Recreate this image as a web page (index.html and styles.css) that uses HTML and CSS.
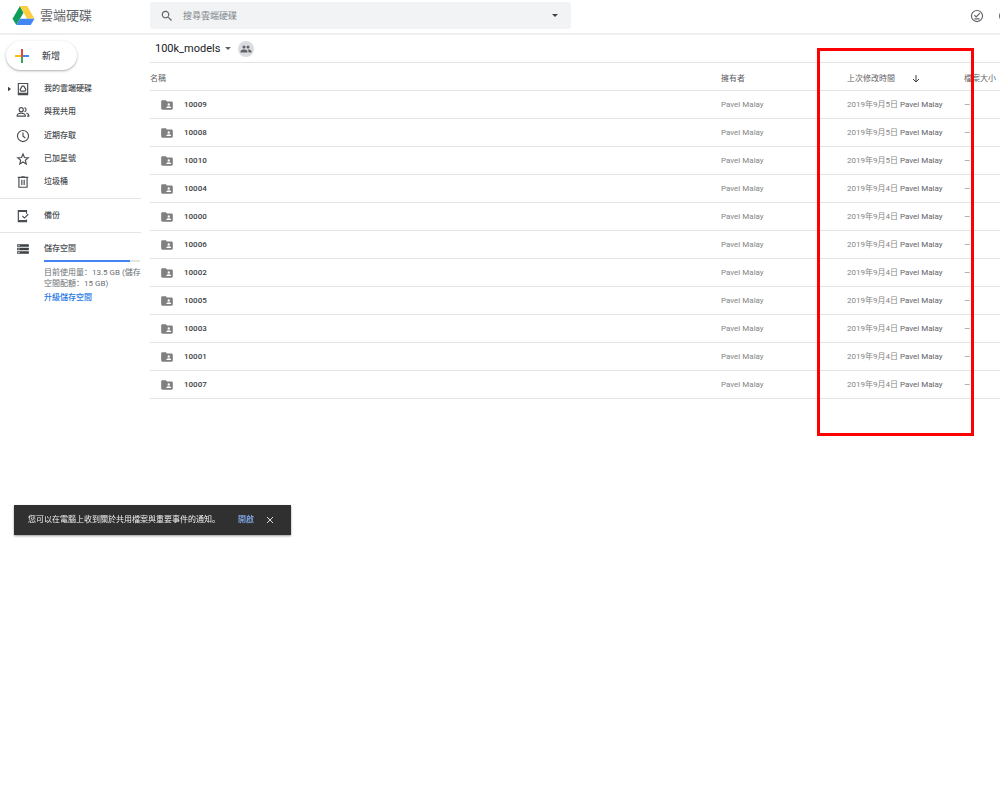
FILE: index.html
```
<!DOCTYPE html>
<html lang="zh">
<head>
<meta charset="utf-8">
<title>100k_models - 雲端硬碟</title>
<link rel="stylesheet" href="styles.css">
</head>
<body>
<svg class="sprite" aria-hidden="true">
  <symbol id="folder" viewBox="0 0 24 24"><path d="M20 6h-8l-2-2H4a2 2 0 0 0-2 2v12a2 2 0 0 0 2 2h16a2 2 0 0 0 2-2V8a2 2 0 0 0-2-2zm-5 3a2 2 0 1 1 0 4 2 2 0 0 1 0-4zm4 8h-8v-1c0-1.330 2.670-2 4-2s4 .67 4 2v1z"/></symbol>
</svg>
<header class="topbar">
  <a class="brand" href="#">
    <svg class="logo" viewBox="0 0 24 22">
      <path fill="#0f9d58" d="M8.300 1 0.500 14.500 4.500 21 12 8z"/>
      <path fill="#ffcd40" d="M8.300 1h7.600L23.500 14.500h-7.800z"/>
      <path fill="#4285f4" d="M8.300 14.500h15.200L19.600 21H4.500z"/>
    </svg>
    <span>雲端硬碟</span>
  </a>
  <form class="search">
    <svg class="search-icon" viewBox="0 0 24 24"><path d="M15.500 14h-.8l-.3-.3A6.500 6.500 0 1 0 13.700 14.400l.3.300v.8l5 5 1.500-1.500-5-5zm-6 0a4.500 4.500 0 1 1 0-9 4.500 4.500 0 0 1 0 9z"/></svg>
    <input class="search-input" type="text" placeholder="搜尋雲端硬碟" aria-label="搜尋雲端硬碟">
    <button class="icon-button" type="button" aria-label="搜尋選項"><svg class="caret" viewBox="0 0 8 4"><path d="M0 0h8L4 4z"/></svg></button>
  </form>
  <div class="tools">
    <button class="icon-button" type="button" aria-label="離線狀態">
      <svg class="tool-icon" viewBox="0 0 24 24" fill="none" stroke="#5f6368" stroke-width="2"><circle cx="12" cy="12" r="9.500"/><path d="M7.500 10.500l3 3L17 7M7.500 17h9"/></svg>
    </button>
    <button class="icon-button" type="button" aria-label="說明">
      <svg class="tool-icon" viewBox="0 0 24 24" fill="none" stroke="#5f6368" stroke-width="2.500"><circle cx="12" cy="12" r="9"/><path d="M9 10a3 3 0 1 1 3 3v2"/></svg>
    </button>
  </div>
</header>
<div class="layout">
  <nav class="sidebar">
    <button class="new-button" type="button">
      <svg class="plus" viewBox="0 0 14 14"><path fill="#4285f4" d="M8 6h6v2H8z"/><path fill="#34a853" d="M6 8h2v6H6z"/><path fill="#fbbc04" d="M0 6h6v2H0z"/><path fill="#ea4335" d="M6 0h2v8H6z"/></svg>
      <span>新增</span>
    </button>
    <ul class="menu">
      <li><a href="#"><svg class="arrow" viewBox="0 0 4 6"><path d="M0 0l4 3-4 3z"/></svg><svg class="nav-icon line" viewBox="0 0 24 24"><path d="M4 2.500h16v19H4zM4 19.500h16"/><path d="M10.500 7h3l3.500 6-1.500 2.500h-7L7 13z"/></svg>我的雲端硬碟</a></li>
      <li><a href="#"><svg class="nav-icon line" viewBox="0 0 24 24"><circle cx="9" cy="8" r="3.500"/><path d="M2 19v-1c0-2.500 4-4 7-4s7 1.500 7 4v1zM14.500 4.500a3.600 3.600 0 0 1 0 7M18 14c2.500.8 4 2 4 4v1h-3"/></svg>與我共用</a></li>
      <li><a href="#"><svg class="nav-icon line" viewBox="0 0 24 24"><circle cx="12" cy="12" r="9.500"/><path d="M12 6v6.500l4 3"/></svg>近期存取</a></li>
      <li><a href="#"><svg class="nav-icon line" viewBox="0 0 24 24"><path d="M12 3.500l2.500 6 6.500.5-5 4.200 1.500 6.300-5.500-3.400-5.500 3.400L8 14.200 3 10l6.500-.5z"/></svg>已加星號</a></li>
      <li><a href="#"><svg class="nav-icon line" viewBox="0 0 24 24"><path d="M3 4h18M9 3h6M5 4v17h14V4M10 8v9M14 8v9"/></svg>垃圾桶</a></li>
    </ul>
    <ul class="menu single">
      <li><a href="#"><svg class="nav-icon line" viewBox="0 0 24 24"><path d="M18 8V2.500H4v19h14V18M4 4h14M4 20h14M11 12l3.500 3.500 6.500-6.500"/></svg>備份</a></li>
    </ul>
    <section class="storage">
      <a class="storage-title" href="#"><svg class="nav-icon" viewBox="0 0 24 24"><path fill="#3c4043" d="M2 4h20v4H2zM2 10h20v4H2zM2 16h20v4H2z"/><path fill="#fff" d="M4 5h2v2H4zM4 11h2v2H4zM4 17h2v2H4z"/></svg>儲存空間</a>
      <div class="storage-body">
        <div class="meter"><div class="meter-fill"></div></div>
        <p>目前使用量：13.5 GB (儲存空間配額：15 GB)</p>
        <a class="upgrade" href="#">升級儲存空間</a>
      </div>
    </section>
  </nav>
  <main class="content">
    <div class="path">
      <button class="path-button" type="button">100k_models<svg class="path-caret" viewBox="0 0 8 4"><path d="M0 0h8L4 4z"/></svg></button>
      <button class="shared" type="button" aria-label="管理共用">
        <svg viewBox="0 0 24 24"><path d="M16 11a3 3 0 1 0 0-6 3 3 0 0 0 0 6zm-8 0a3 3 0 1 0 0-6 3 3 0 0 0 0 6zm0 2c-2.300 0-7 1.200-7 3.500V19h14v-2.500C15 14.200 10.300 13 8 13zm8 0-1 .1c1.200.8 2 2 2 3.400V19h6v-2.500c0-2.300-4.700-3.500-7-3.500z"/></svg>
      </button>
    </div>
    <table class="files">
      <thead>
        <tr><th>名稱</th><th class="col-owner">擁有者</th><th class="col-date">上次修改時間<svg class="sort" viewBox="0 0 8 8"><path d="M4 0v7M1 4l3 3 3-3"/></svg></th><th class="col-size">檔案大小</th></tr>
      </thead>
      <tbody>
        <tr><td class="name"><svg><use href="#folder"/></svg>10009</td><td>Pavel Malay</td><td>2019年9月5日 <span>Pavel Malay</span></td><td>—</td></tr>
        <tr><td class="name"><svg><use href="#folder"/></svg>10008</td><td>Pavel Malay</td><td>2019年9月5日 <span>Pavel Malay</span></td><td>—</td></tr>
        <tr><td class="name"><svg><use href="#folder"/></svg>10010</td><td>Pavel Malay</td><td>2019年9月5日 <span>Pavel Malay</span></td><td>—</td></tr>
        <tr><td class="name"><svg><use href="#folder"/></svg>10004</td><td>Pavel Malay</td><td>2019年9月4日 <span>Pavel Malay</span></td><td>—</td></tr>
        <tr><td class="name"><svg><use href="#folder"/></svg>10000</td><td>Pavel Malay</td><td>2019年9月4日 <span>Pavel Malay</span></td><td>—</td></tr>
        <tr><td class="name"><svg><use href="#folder"/></svg>10006</td><td>Pavel Malay</td><td>2019年9月4日 <span>Pavel Malay</span></td><td>—</td></tr>
        <tr><td class="name"><svg><use href="#folder"/></svg>10002</td><td>Pavel Malay</td><td>2019年9月4日 <span>Pavel Malay</span></td><td>—</td></tr>
        <tr><td class="name"><svg><use href="#folder"/></svg>10005</td><td>Pavel Malay</td><td>2019年9月4日 <span>Pavel Malay</span></td><td>—</td></tr>
        <tr><td class="name"><svg><use href="#folder"/></svg>10003</td><td>Pavel Malay</td><td>2019年9月4日 <span>Pavel Malay</span></td><td>—</td></tr>
        <tr><td class="name"><svg><use href="#folder"/></svg>10001</td><td>Pavel Malay</td><td>2019年9月4日 <span>Pavel Malay</span></td><td>—</td></tr>
        <tr><td class="name"><svg><use href="#folder"/></svg>10007</td><td>Pavel Malay</td><td>2019年9月4日 <span>Pavel Malay</span></td><td>—</td></tr>
      </tbody>
    </table>
    <div class="highlight"></div>
  </main>
</div>
<div class="toast" role="status">
  <span>您可以在電腦上收到關於共用檔案與重要事件的通知。</span>
  <button class="toast-action" type="button">開啟</button>
  <button class="icon-button" type="button" aria-label="關閉"><svg class="close" viewBox="0 0 8 8"><path d="M1 1l6 6M7 1L1 7"/></svg></button>
</div>
</body>
</html>
```
FILE: styles.css
```
* { box-sizing: border-box; }
body {
  margin: 0;
  background: #fff;
  color: #5f6368;
  font: 8px/12px Roboto, "Noto Sans CJK TC", sans-serif;
}
a { color: inherit; text-decoration: none; }
button {
  display: flex;
  align-items: center;
  border: 0;
  padding: 0;
  background: none;
  color: inherit;
  font: inherit;
}
svg { display: block; flex: none; }
ul, p { margin: 0; padding: 0; list-style: none; }
.sprite { position: absolute; width: 0; height: 0; }

.topbar {
  display: flex;
  align-items: flex-start;
  height: 35px;
  padding-top: 2px;
  border-bottom: 2px solid #efefef;
  overflow: hidden;
}
.brand {
  display: flex;
  align-items: center;
  gap: 5px;
  flex: 0 0 150px;
  height: 27px;
  padding-left: 12px;
  font-size: 13px;
}
.logo { width: 23px; height: 21px; }
.search {
  display: flex;
  align-items: center;
  flex: 0 1 421px;
  height: 27px;
  padding: 0 13px 0 10px;
  border-radius: 3px;
  background: #f1f3f4;
}
.search-icon { width: 14px; height: 14px; fill: #5f6368; }
.search-input {
  flex: 1;
  min-width: 0;
  margin-left: 9px;
  padding: 0;
  border: 0;
  background: none;
  font: inherit;
  font-size: 9px;
}
.search-input::placeholder { color: #80868b; }
.caret { width: 6px; height: 3px; fill: #3c4043; }
.tools {
  display: flex;
  gap: 14px;
  height: 27px;
  margin-left: auto;
  margin-right: -12px;
}
.tool-icon { width: 14px; height: 14px; }

.layout { display: flex; }
.sidebar { flex: 0 0 150px; color: #4a4d51; }
.new-button {
  gap: 13px;
  height: 29px;
  margin: 6px 0 7px 6px;
  padding: 0 17px 0 9px;
  border-radius: 15px;
  box-shadow: 0 1px 2px rgba(60, 64, 67, .3), 0 1px 3px rgba(60, 64, 67, .15);
  font-size: 9px;
  font-weight: 500;
}
.plus { width: 14px; height: 14px; }
.menu {
  display: flex;
  flex-direction: column;
  min-height: 117px;
  margin-right: 9px;
}
.menu li { flex: 1; display: flex; }
.menu a, .storage-title {
  display: flex;
  align-items: center;
  gap: 14px;
  padding-left: 16px;
  font-weight: 500;
}
.menu .arrow { width: 3px; height: 6px; margin: 0 -9px 0 -8px; fill: #3c4043; }
.nav-icon { width: 14px; height: 14px; }
.line { fill: none; stroke: #4a4d51; stroke-width: 2; }
.single {
  min-height: 35px;
  margin-top: 4px;
  border: solid #e4e4e4;
  border-width: 1px 0;
}
.storage-title { height: 23px; margin-top: 4px; }
.storage-body {
  padding-left: 44px;
  color: #6b6f73;
  font-family: Roboto, "Noto Sans CJK JP", sans-serif;
}
.meter { height: 2px; margin: 0 10px 5px 0; background: #e4e4e4; }
.meter-fill { width: 90%; height: 2px; background: #4285f4; }
.storage-body p { padding-right: 6px; line-height: 11px; }
.upgrade { display: block; margin-top: 3px; color: #1a73e8; font-weight: 500; }

.content { position: relative; flex: 1; min-width: 0; min-height: 410px; }
.path {
  display: flex;
  align-items: center;
  gap: 7px;
  height: 28px;
  padding-left: 5px;
  border-bottom: 1px solid #e4e4e4;
}
.path-button {
  gap: 5px;
  color: #202124;
  font-size: 11px;
}
.path-caret { width: 6px; height: 3px; fill: #5f6368; }
.shared {
  justify-content: center;
  width: 16px;
  height: 16px;
  border-radius: 50%;
  background: #dadce0;
}
.shared svg { width: 12px; height: 12px; fill: #5f6368; }

.files {
  width: 100%;
  table-layout: fixed;
  border-collapse: collapse;
  color: #858585;
  white-space: nowrap;
}
.files th, .files td {
  height: 28px;
  padding: 2px 0 0;
  border-bottom: 1px solid #e4e4e4;
  text-align: left;
  vertical-align: middle;
}
.files th { height: 27px; padding-top: 6px; color: #5f6368; font-weight: 400; }
.files td span { color: #5f6368; }
.files .name { color: #3c4043; font-weight: 500; }
.name svg {
  display: inline-block;
  width: 14px;
  height: 14px;
  margin: 0 10px;
  fill: #808080;
  vertical-align: middle;
}
.col-owner { width: 126px; }
.col-date { width: 117px; }
.col-size { width: 36px; }
.sort {
  display: inline-block;
  width: 8px;
  height: 8px;
  margin-left: 17px;
  fill: none;
  stroke: #3c4043;
  vertical-align: middle;
}
/* frame drawn over the last-modified column */
.highlight {
  position: absolute;
  top: 13px;
  right: 26px;
  width: 157px;
  height: 388px;
  border: 3px solid #f00;
  pointer-events: none;
}

.toast {
  position: fixed;
  top: 505px;
  left: 14px;
  display: flex;
  align-items: center;
  height: 30px;
  padding: 0 17px 0 14px;
  background: #303030;
  box-shadow: 0 1px 2px rgba(0, 0, 0, .4);
  color: #f1f1f1;
  font-family: Roboto, "Noto Sans CJK JP", sans-serif;
}
.toast-action { margin: 0 12px 0 18px; color: #8ab4f8; font-weight: 500; }
.close { width: 8px; height: 8px; stroke: #ddd; }
```
